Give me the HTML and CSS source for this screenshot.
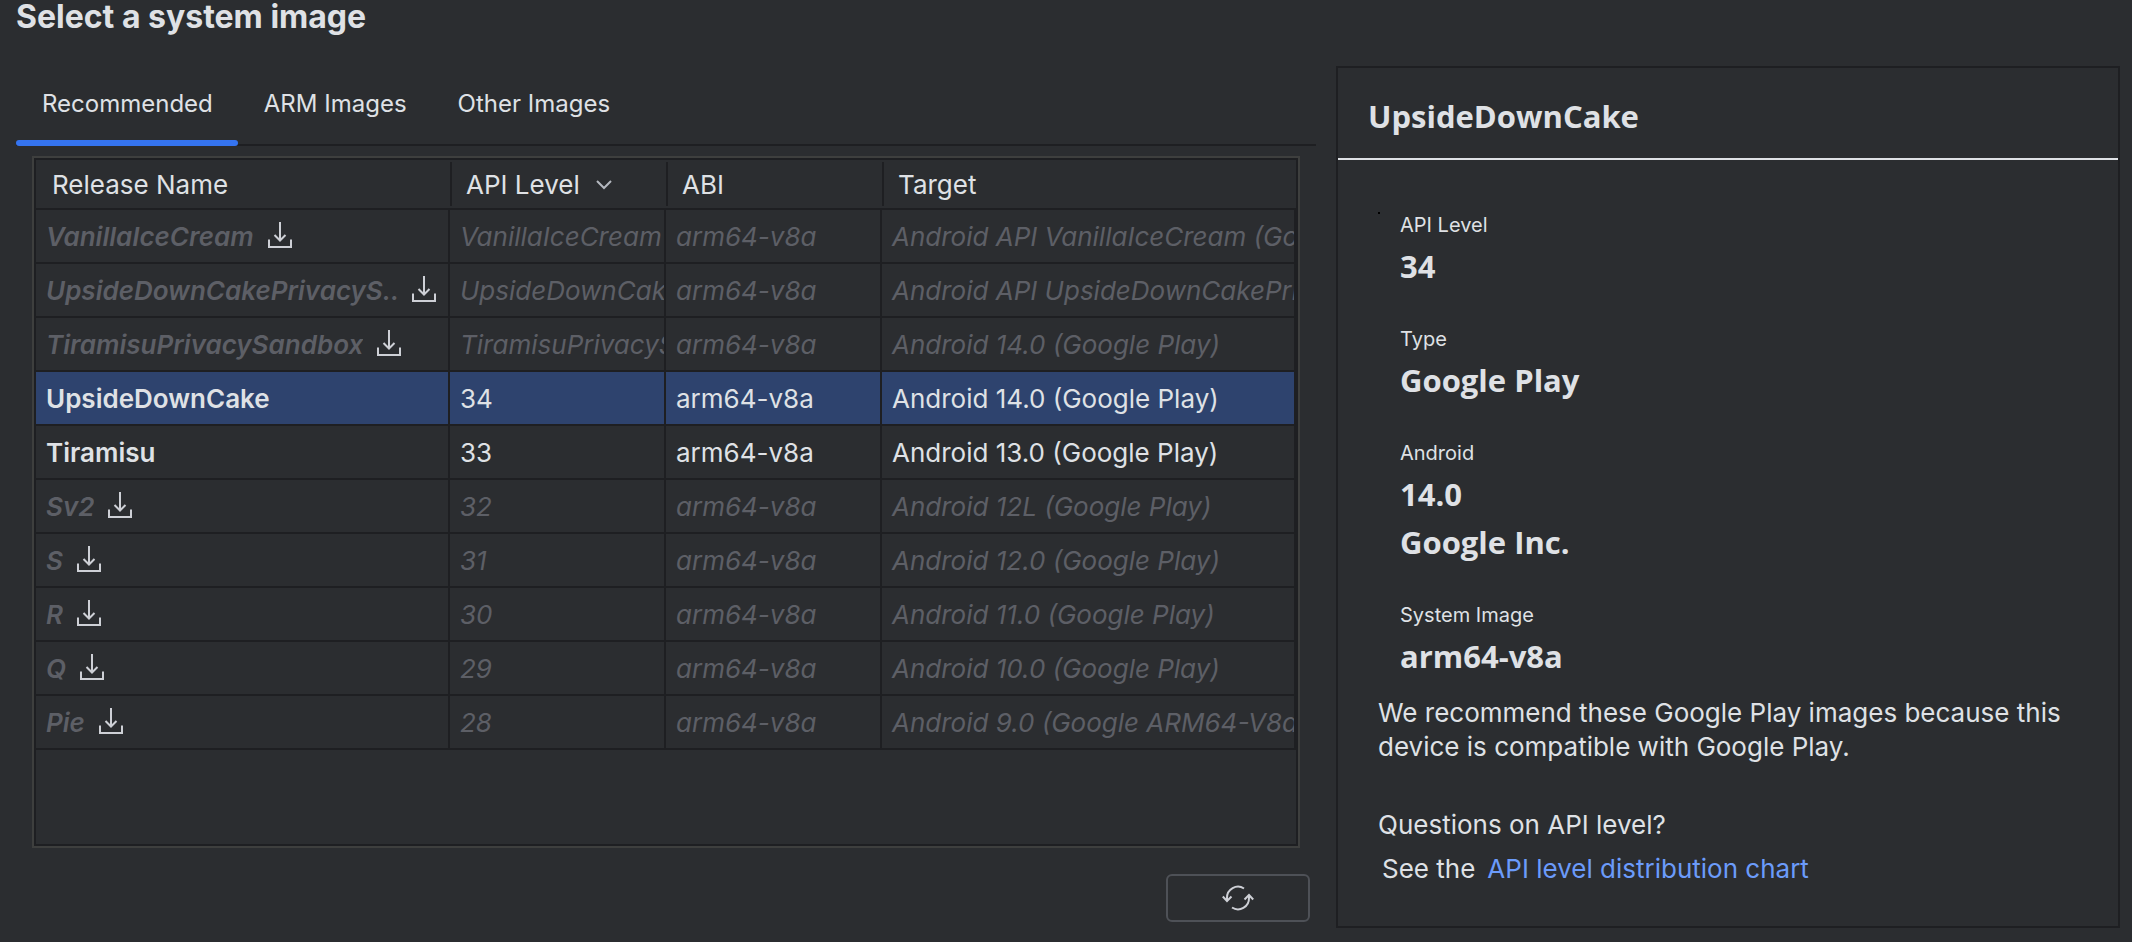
FILE: index.html
```html
<!DOCTYPE html>
<html lang="en">
<head>
<meta charset="utf-8">
<title>Select a system image</title>
<link rel="stylesheet" href="styles.css">
</head>
<body>
<svg class="sprite" aria-hidden="true">
  <symbol id="download" viewBox="0 0 32 32">
    <path d="M16 3V21M10.5 16L16 21.5L21.500 16M5 20.500V28H27V20.500" fill="none" stroke="currentColor" stroke-width="2"/>
  </symbol>
</svg>
<div class="dialog">
  <main class="browser">
    <h1 class="title">Select a system image</h1>
    <div class="tabs" role="tablist">
      <button class="tab tab-active" role="tab" aria-selected="true">Recommended</button>
      <button class="tab" role="tab" aria-selected="false">ARM Images</button>
      <button class="tab" role="tab" aria-selected="false">Other Images</button>
    </div>
    <div class="table-frame" role="tabpanel">
      <table class="images">
        <colgroup><col><col class="col-narrow"><col class="col-narrow"><col></colgroup>
        <thead>
          <tr>
            <th scope="col">Release Name</th>
            <th scope="col" aria-sort="descending">API Level<svg class="sort" viewBox="0 0 16 10" aria-hidden="true"><path d="M1 1L8 8L15 1" fill="none" stroke="currentColor" stroke-width="2"/></svg></th>
            <th scope="col">ABI</th>
            <th scope="col">Target</th>
          </tr>
        </thead>
        <tbody>
          <tr class="remote"><td><div class="name"><span>VanillaIceCream</span><svg class="download" role="img" aria-label="Download"><use href="#download"/></svg></div></td><td>VanillaIceCream</td><td>arm64-v8a</td><td>Android API VanillaIceCream (Go</td></tr>
          <tr class="remote"><td><div class="name"><span>UpsideDownCakePrivacyS...</span><svg class="download" role="img" aria-label="Download"><use href="#download"/></svg></div></td><td>UpsideDownCak</td><td>arm64-v8a</td><td>Android API UpsideDownCakePri</td></tr>
          <tr class="remote"><td><div class="name"><span>TiramisuPrivacySandbox</span><svg class="download" role="img" aria-label="Download"><use href="#download"/></svg></div></td><td>TiramisuPrivacyS</td><td>arm64-v8a</td><td>Android 14.0 (Google Play)</td></tr>
          <tr class="selected"><td><div class="name"><span>UpsideDownCake</span></div></td><td>34</td><td>arm64-v8a</td><td>Android 14.0 (Google Play)</td></tr>
          <tr><td><div class="name"><span>Tiramisu</span></div></td><td>33</td><td>arm64-v8a</td><td>Android 13.0 (Google Play)</td></tr>
          <tr class="remote"><td><div class="name"><span>Sv2</span><svg class="download" role="img" aria-label="Download"><use href="#download"/></svg></div></td><td>32</td><td>arm64-v8a</td><td>Android 12L (Google Play)</td></tr>
          <tr class="remote"><td><div class="name"><span>S</span><svg class="download" role="img" aria-label="Download"><use href="#download"/></svg></div></td><td>31</td><td>arm64-v8a</td><td>Android 12.0 (Google Play)</td></tr>
          <tr class="remote"><td><div class="name"><span>R</span><svg class="download" role="img" aria-label="Download"><use href="#download"/></svg></div></td><td>30</td><td>arm64-v8a</td><td>Android 11.0 (Google Play)</td></tr>
          <tr class="remote"><td><div class="name"><span>Q</span><svg class="download" role="img" aria-label="Download"><use href="#download"/></svg></div></td><td>29</td><td>arm64-v8a</td><td>Android 10.0 (Google Play)</td></tr>
          <tr class="remote"><td><div class="name"><span>Pie</span><svg class="download" role="img" aria-label="Download"><use href="#download"/></svg></div></td><td>28</td><td>arm64-v8a</td><td>Android 9.0 (Google ARM64-V8a</td></tr>
        </tbody>
      </table>
    </div>
    <div class="actions">
      <button class="refresh" aria-label="Refresh">
        <svg class="refresh-icon" viewBox="0 0 32 32" aria-hidden="true">
          <path d="M22 6.500A11 11 0 0 0 5 16V19M.800 14.500L5 19L9.500 14.500M10 25.500A11 11 0 0 0 27 16V13M22.500 17.500L27 13L31.200 17.500" fill="none" stroke="currentColor" stroke-width="2"/>
        </svg>
      </button>
    </div>
  </main>
  <aside class="details">
    <h2 class="details-title">UpsideDownCake</h2>
    <div class="details-body">
      <dl class="facts">
        <div class="fact"><dt>API Level</dt><dd>34</dd></div>
        <div class="fact"><dt>Type</dt><dd>Google Play</dd></div>
        <div class="fact"><dt>Android</dt><dd>14.0</dd><dd>Google Inc.</dd></div>
        <div class="fact"><dt>System Image</dt><dd>arm64-v8a</dd></div>
      </dl>
      <p class="advice">We recommend these Google Play images because this device is compatible with Google Play.</p>
      <p class="question">Questions on API level?</p>
      <p class="more"><span>See the</span><a href="#distribution">API level distribution chart</a></p>
    </div>
  </aside>
</div>
</body>
</html>
```

FILE: styles.css
```css
* { box-sizing: border-box; }

body {
  margin: 0;
  background: #2b2d30;
  color: #dfe1e5;
  font: 26px/34px Inter, "Liberation Sans", sans-serif;
}

h1, h2, p, dl, dd { margin: 0; }

button { font: inherit; color: inherit; background: none; border: 0; }

.sprite { display: none; }

.dialog {
  display: grid;
  grid-template-columns: minmax(0, 1300fr) minmax(0, 784fr);
  gap: 20px;
  min-height: 100vh;
  padding: 0 12px 0 16px;
}

.browser { display: flex; flex-direction: column; padding-bottom: 20px; }

.title { font-size: 32px; line-height: 34px; font-weight: 700; }

.tabs {
  display: flex;
  height: 86px;
  margin-top: 26px;
  background: linear-gradient(#1e1f22, #1e1f22) bottom / 100% 2px no-repeat;
}

.tab { position: relative; padding: 2px 25px 0 26px; font-size: 24px; }

.tab-active::after {
  content: "";
  position: absolute;
  inset: auto 0 0;
  height: 6px;
  border-radius: 3px;
  background: #3574f0;
}

.table-frame {
  flex: 1;
  margin: 10px 16px 0;
  border: 2px solid #3e3f3e;
  outline: 2px solid #1e1f22;
  outline-offset: -4px;
  padding: 2px;
}

.images {
  width: 100%;
  table-layout: fixed;
  border-collapse: separate;
  border-spacing: 0;
}

.col-narrow { width: 216px; }

.images th {
  height: 50px;
  padding: 2px 14px 0 16px;
  border-bottom: 2px solid #1e1f22;
  font-weight: 400;
  text-align: left;
  white-space: nowrap;
}

.images th + th { background: linear-gradient(#1e1f22, #1e1f22) left center / 2px 44px no-repeat; }

.images td {
  height: 54px;
  padding: 2px 0 0 10px;
  border: solid #1e1f22;
  border-width: 0 2px 2px 0;
  overflow: hidden;
  white-space: nowrap;
}

.name { display: flex; align-items: center; gap: 10px; padding-right: 8px; font-weight: 600; }
.name span { overflow: hidden; }

.remote { color: #5d5f66; font-style: oblique 10deg; }
.selected { background: #2e436e; }

.download { flex: none; width: 32px; height: 32px; margin-bottom: 4px; color: #ced0d6; }
.sort { width: 16px; height: 10px; margin-left: 16px; vertical-align: 4px; color: #b4b8bf; }

.actions { display: flex; justify-content: flex-end; padding: 26px 6px 0; }

.refresh {
  display: grid;
  place-items: center;
  width: 144px;
  height: 48px;
  border: 2px solid #4e5157;
  border-radius: 6px;
}

.refresh-icon { width: 32px; height: 32px; color: #ced0d6; }

.details { margin: 66px 0 14px; border: 2px solid #1e1f22; }

.details-title {
  padding: 26px 30px 20px;
  border-bottom: 2px solid #dfe1e5;
  font: 700 31px/44px "Open Sans", sans-serif;
}

.details-body { padding: 48px 40px 0; }

.facts { position: relative; display: grid; gap: 32px; padding-left: 22px; }

.facts::before {
  content: "";
  position: absolute;
  top: 4px;
  left: 0;
  width: 2px;
  height: 2px;
  background: #000;
}

dt { font-size: 20px; }
dd { font: 700 31px/48px "Open Sans", sans-serif; }

.advice { margin-top: 16px; }
.question { margin-top: 44px; }
.more { display: flex; gap: 12px; margin-top: 10px; padding-left: 4px; }
.more a { color: #6b9bfa; text-decoration: none; }
```
